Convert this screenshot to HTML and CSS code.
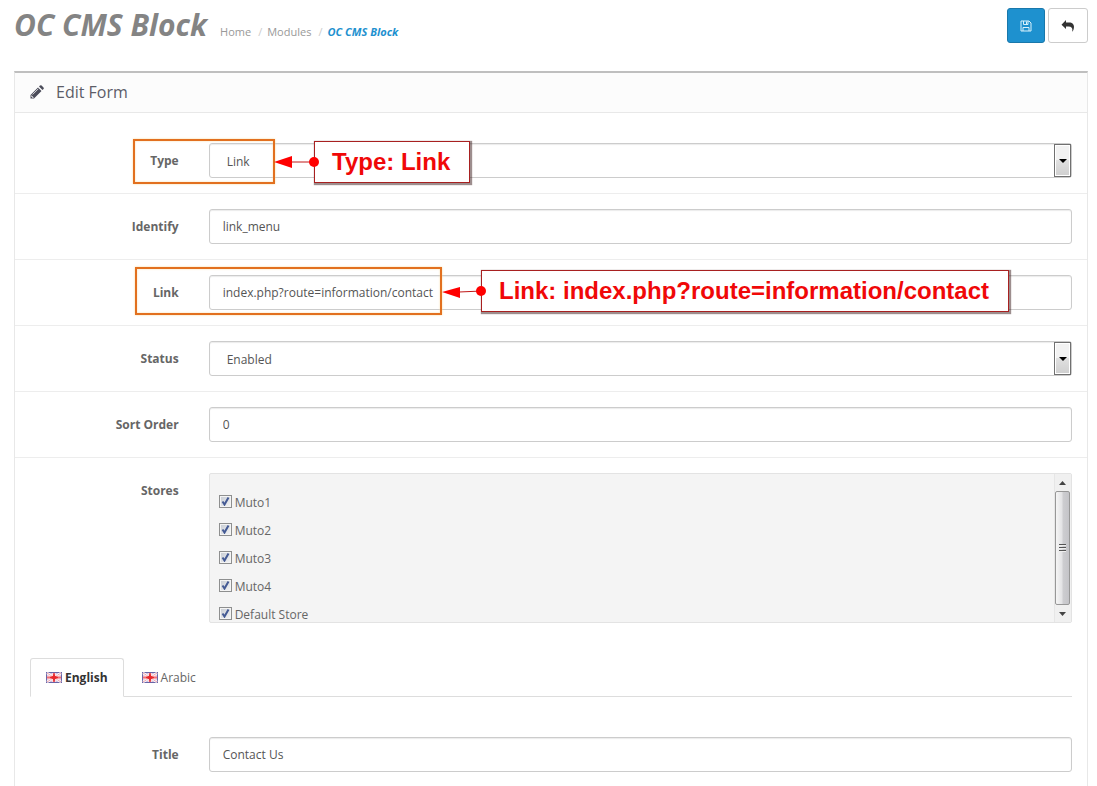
FILE: index.html
```html
<!DOCTYPE html>
<html lang="en">
<head>
<meta charset="utf-8">
<title>OC CMS Block</title>
<link rel="stylesheet" href="styles.css">
</head>
<body>
<svg class="defs" aria-hidden="true">
  <symbol id="flag" viewBox="0 0 16 11">
    <rect width="16" height="11" fill="#6a64a6"/>
    <path d="M1 1h14v9H1z" fill="#c9c2e2"/>
    <path d="M1 1l14 9M15 1L1 10" stroke="#fff" stroke-width="2.400"/>
    <path d="M1 1l14 9M15 1L1 10" stroke="#f0a0a8" stroke-width="1"/>
    <path d="M8 1v9M1 5.500h14" stroke="#fbd9de" stroke-width="4"/>
    <path d="M8 1v9" stroke="#ea5a62" stroke-width="2"/>
    <path d="M1 5.500h14" stroke="#f07078" stroke-width="2"/>
    <path d="M8 2.500l1 2 3 1-3 1-1 2-1-2-3-1 3-1z" fill="#e8282c" stroke="#e8282c"/>
  </symbol>
</svg>
<header class="page-header">
  <h1>OC CMS Block</h1>
  <nav class="breadcrumb" aria-label="Breadcrumb">
    <a href="#">Home</a><span class="sep">/</span><a href="#">Modules</a><span class="sep">/</span><a href="#" class="current">OC CMS Block</a>
  </nav>
  <div class="actions">
    <button class="btn btn-primary" type="submit" form="block-form" aria-label="Save">
      <svg width="12" height="12" viewBox="0 0 12 12" fill="none" stroke="#d9f1fb"><path d="M1 1h8l2 2v8H1zM3.500 1v3.500h4.500V1M3 11V7.500h6V11"/><path d="M6.500 1.500v2.500"/></svg>
    </button>
    <button class="btn btn-default" type="button" aria-label="Back">
      <svg width="14" height="12" viewBox="0 0 14 12"><path d="M5 0v2.500h3c3.500 0 5 2 5 4.500 0 1.500-.5 3-1.300 4.500-.3.200-.5 0-.4-.4.500-3-.8-4.600-3.800-4.600H5V9L.5 4.700z" fill="#333"/></svg>
    </button>
  </div>
</header>
<main class="panel">
  <div class="panel-heading">
    <svg width="14" height="14" viewBox="0 0 14 14"><path d="M0.500 10L8 2.500l3.500 3.500L4 13.500H.5zM9 1.500l1-1q.8-.7 1.600 0l1.900 1.900q.7.800 0 1.600l-1 1z" fill="#4c4d5a"/><path d="M2.600 9.500l5.700-5.700M1.500 10.500v1h1v1h1" stroke="#fcfcfc" stroke-width=".8" fill="none"/></svg>
    <h2>Edit Form</h2>
  </div>
  <form class="panel-body" id="block-form">
    <div class="form-group">
      <label for="type">Type</label>
      <div class="field">
        <div class="select-wrap"><select id="type" class="control"><option>Link</option><option>Block</option></select><span class="drop"></span></div>
      </div>
      <div class="mark mark-type"></div>
      <div class="callout callout-type">
        <svg class="arrow" width="46" height="12" viewBox="0 0 46 12"><path d="M18 6h24" stroke="#c01818"/><path d="M1 6l18-6v12z" fill="#f00"/><circle cx="41" cy="6" r="5" fill="#f00"/></svg>
        <span class="note">Type: Link</span>
      </div>
    </div>
    <div class="form-group">
      <label for="identify">Identify</label>
      <div class="field"><input id="identify" class="control" type="text" value="link_menu"></div>
    </div>
    <div class="form-group">
      <label for="link">Link</label>
      <div class="field"><input id="link" class="control" type="text" value="index.php?route=information/contact"></div>
      <div class="mark mark-link"></div>
      <div class="callout callout-link">
        <svg class="arrow" width="46" height="14" viewBox="0 0 46 14"><path d="M18 8l23-1" stroke="#c01818"/><path d="M1 8l18-5v11z" fill="#f00"/><circle cx="40" cy="7" r="5" fill="#f00"/></svg>
        <span class="note">Link: index.php?route=information/contact</span>
      </div>
    </div>
    <div class="form-group">
      <label for="status">Status</label>
      <div class="field">
        <div class="select-wrap"><select id="status" class="control"><option>Enabled</option><option>Disabled</option></select><span class="drop"></span></div>
      </div>
    </div>
    <div class="form-group">
      <label for="sort">Sort Order</label>
      <div class="field"><input id="sort" class="control" type="text" value="0"></div>
    </div>
    <div class="form-group" role="group" aria-labelledby="stores-label">
      <span class="label" id="stores-label">Stores</span>
      <div class="field">
        <div class="well">
          <div class="stores">
            <label><input type="checkbox" checked>Muto1</label>
            <label><input type="checkbox" checked>Muto2</label>
            <label><input type="checkbox" checked>Muto3</label>
            <label><input type="checkbox" checked>Muto4</label>
            <label><input type="checkbox" checked>Default Store</label>
          </div>
          <div class="scrollbar" aria-hidden="true">
            <svg width="15" height="17" viewBox="0 0 15 17"><path d="M4 11l3.500-4 3.500 4z" fill="#444"/></svg>
            <div class="thumb"><i></i><i></i><i></i></div>
            <svg width="15" height="17" viewBox="0 0 15 17"><path d="M4 7h7l-3.500 4z" fill="#444"/></svg>
          </div>
        </div>
      </div>
    </div>
    <div class="tabs">
      <a href="#english" class="tab active"><svg width="16" height="11"><use href="#flag"/></svg>English</a>
      <a href="#arabic" class="tab"><svg width="16" height="11"><use href="#flag"/></svg>Arabic</a>
    </div>
    <div class="form-group" id="english">
      <label for="title">Title</label>
      <div class="field"><input id="title" class="control" type="text" value="Contact Us"></div>
    </div>
  </form>
</main>
</body>
</html>
```
FILE: styles.css
```css
* { box-sizing: border-box; }
html { overflow: hidden; }
body {
  margin: 0;
  padding: 0 9px 0 14px;
  background: #fff;
  color: #666;
  font: 12px/20px "Open Sans", sans-serif;
}
.defs { display: none; }
a { color: inherit; text-decoration: none; }

.page-header {
  display: flex;
  align-items: flex-start;
  padding-top: 8px;
  margin-bottom: 28px;
}
h1 {
  margin: 0 13px 0 0;
  color: #848484;
  font-size: 30px;
  font-style: italic;
  font-weight: 700;
  line-height: 34px;
}
.breadcrumb { display: flex; padding-top: 14px; color: #999; font-size: 11px; }
.sep { padding: 0 5px 0 7px; color: #ccc; }
.current { color: #1e91cf; font-style: italic; font-weight: 700; }
.actions { display: flex; gap: 3px; margin-left: auto; }
.btn {
  display: flex;
  align-items: center;
  justify-content: center;
  height: 35px;
  padding: 0 12px;
  border: 1px solid #ccc;
  border-radius: 3px;
  background: #fff;
}
.btn-primary { background: #1e91cf; border-color: #1978ab; }

.panel {
  border: 1px solid #e8e8e8;
  border-top: 2px solid #bfbfbf;
}
.panel-heading {
  display: flex;
  align-items: center;
  gap: 12px;
  height: 40px;
  padding: 0 15px 2px;
  background: #fcfcfc;
  border-bottom: 1px solid #e8e8e8;
}
h2 { margin: 0; color: #5c5d68; font-size: 16px; font-weight: 400; }
.panel-body { padding: 15px 0; }

.form-group {
  position: relative;
  display: grid;
  grid-template-columns: 1fr 5fr;
  padding: 15px 0;
}
.form-group + .form-group { border-top: 1px solid #ededed; }
.form-group > label, .label {
  padding: 8px 15px 0;
  font-weight: 700;
  text-align: right;
}
.field { min-width: 0; padding: 0 15px; }
.control {
  display: block;
  width: 100%;
  height: 35px;
  padding: 0 13px;
  border: 1px solid #ccc;
  border-radius: 3px;
  background: #fff;
  box-shadow: inset 0 1px 1px rgba(0, 0, 0, .08);
  color: #555;
  font: inherit;
}
.select-wrap { position: relative; }
select.control { padding: 2px 17px 0; appearance: none; }
.drop {
  position: absolute;
  top: 1px;
  right: 1px;
  bottom: 1px;
  display: grid;
  place-items: center;
  width: 17px;
  border: 1px solid #707070;
  box-shadow: inset 0 0 0 1px #fff;
  background: linear-gradient(#f2f2f2 0 50%, #e0e0e0 50%, #cfcfcf);
  pointer-events: none;
}
.drop::before {
  content: "";
  border: 4px solid transparent;
  border-top-color: #000;
  border-bottom: 0;
}

.mark, .callout { position: absolute; pointer-events: none; }
.mark { border: 2px solid #e2701f; box-shadow: 0 0 2px #f8d9a0, inset 0 0 2px #f8d9a0; }
.mark-type { top: 11px; left: 118px; width: 142px; height: 45px; }
.mark-link { top: 7px; left: 120px; width: 307px; height: 48px; }
.callout { display: flex; align-items: center; }
.callout-type { top: 13px; left: 258px; }
.callout-link { top: 10px; left: 426px; }
.arrow { position: relative; z-index: 1; margin-right: -6px; }
.callout-type .arrow { margin-right: -5px; }
.note {
  padding: 0 19px 0 17px;
  border: 1px solid #a82020;
  background: #fff;
  box-shadow: 1px 1px 1px 1px rgba(60, 30, 30, .5);
  color: #f00808;
  font: 700 24px/40px "Liberation Sans", Arial, sans-serif;
  white-space: nowrap;
}

.well {
  display: flex;
  height: 150px;
  border: 1px solid #e3e3e3;
  border-radius: 2px;
  background: #f4f4f4;
  overflow: hidden;
}
.stores { flex: 1; padding: 15px 9px 0; }
.stores label { display: flex; align-items: center; gap: 3px; height: 28px; }
.stores input {
  appearance: none;
  width: 13px;
  height: 13px;
  margin: 0 0 4px;
  border: 1px solid #8e8f8f;
  background: url("data:image/svg+xml,%3Csvg xmlns='http://www.w3.org/2000/svg' viewBox='0 0 11 11'%3E%3Cpath d='M2.500 5.500l2 3L8.500 1.500' fill='none' stroke='%23445a94' stroke-width='2'/%3E%3C/svg%3E"), linear-gradient(135deg, #c5cad2, #f6f6f6);
  box-shadow: inset 0 0 0 1px #f4f4f4;
}
.scrollbar {
  display: flex;
  flex-direction: column;
  width: 17px;
  padding: 0 1px 0 0;
  background: #f0f0f0;
  border-left: 1px solid #e6e6e6;
}
.thumb {
  flex: 1;
  display: flex;
  flex-direction: column;
  align-items: center;
  justify-content: center;
  gap: 1px;
  border: 1px solid #979797;
  border-radius: 2px;
  background: linear-gradient(90deg, #f5f5f5, #e3e3e5 45%, #cdcdd0 55%, #c4c4c8);
}
.thumb i { width: 7px; height: 2px; background: linear-gradient(#555 50%, #eee 50%); }

.tabs {
  display: flex;
  margin: 20px 15px 25px;
  border-bottom: 1px solid #ddd;
}
.tab {
  display: flex;
  align-items: center;
  gap: 3px;
  height: 39px;
  margin: 0 2px -1px 0;
  padding: 0 15px;
  border: 1px solid transparent;
  border-radius: 3px 3px 0 0;
}
.tab.active {
  border-color: #ddd;
  border-bottom-color: #fff;
  background: #fff;
  color: #333;
  font-weight: 700;
}
```
